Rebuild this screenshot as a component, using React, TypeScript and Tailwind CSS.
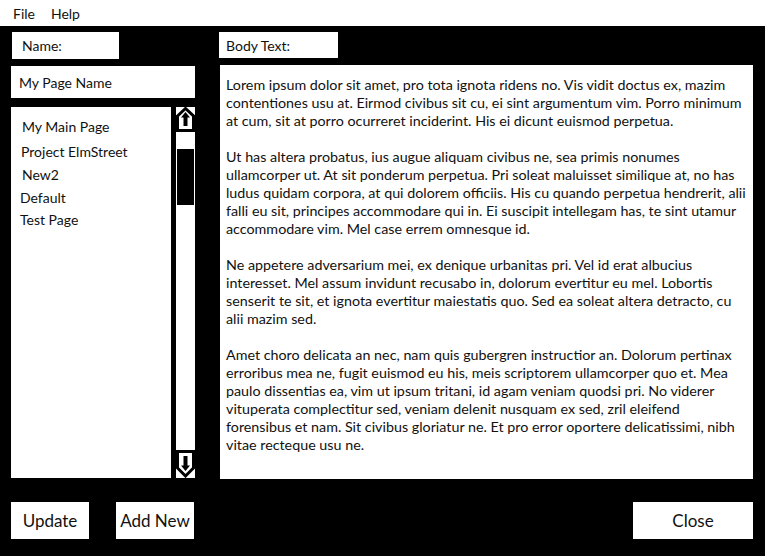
import React from "react";

const paragraphs: string[][] = [
  [
    "Lorem ipsum dolor sit amet, pro tota ignota ridens no. Vis vidit doctus ex, mazim",
    "contentiones usu at. Eirmod civibus sit cu, ei sint argumentum vim. Porro minimum",
    "at cum, sit at porro ocurreret inciderint. His ei dicunt euismod perpetua.",
  ],
  [
    "Ut has altera probatus, ius augue aliquam civibus ne, sea primis nonumes",
    "ullamcorper ut. At sit ponderum perpetua. Pri soleat maluisset similique at, no has",
    "ludus quidam corpora, at qui dolorem officiis. His cu quando perpetua hendrerit, alii",
    "falli eu sit, principes accommodare qui in. Ei suscipit intellegam has, te sint utamur",
    "accommodare vim. Mel case errem omnesque id.",
  ],
  [
    "Ne appetere adversarium mei, ex denique urbanitas pri. Vel id erat albucius",
    "interesset. Mel assum invidunt recusabo in, dolorum evertitur eu mel. Lobortis",
    "senserit te sit, et ignota evertitur maiestatis quo. Sed ea soleat altera detracto, cu",
    "alii mazim sed.",
  ],
  [
    "Amet choro delicata an nec, nam quis gubergren instructior an. Dolorum pertinax",
    "erroribus mea ne, fugit euismod eu his, meis scriptorem ullamcorper quo et. Mea",
    "paulo dissentias ea, vim ut ipsum tritani, id agam veniam quodsi pri. No viderer",
    "vituperata complectitur sed, veniam delenit nusquam ex sed, zril eleifend",
    "forensibus et nam. Sit civibus gloriatur ne. Et pro error oportere delicatissimi, nibh",
    "vitae recteque usu ne.",
  ],
];

function UpArrow() {
  return (
    <svg width="19" height="25" viewBox="0 0 19 25">
      <polygon points="1.5,9 9.5,1.5 17.5,9 17.5,23.5 1.5,23.5" fill="white" stroke="black" strokeWidth="3" />
      <polygon points="9.5,5 14,10.5 11.5,10.5 11.5,19 7.5,19 7.5,10.5 5,10.5" fill="black" />
    </svg>
  );
}

function DownArrow() {
  return (
    <svg width="19" height="28" viewBox="0 0 19 28">
      <polygon points="1.5,1.5 17.5,1.5 17.5,18 9.5,26 1.5,18" fill="white" stroke="black" strokeWidth="3" />
      <polygon points="9.5,21 14,15.5 11.5,15.5 11.5,6 7.5,6 7.5,15.5 5,15.5" fill="black" />
    </svg>
  );
}

export default function App() {
  return (
    <div
      className="w-[765px] h-[556px] bg-black flex flex-col overflow-hidden text-[#111]"
      style={{ fontFamily: "Lato, 'Open Sans', sans-serif" }}
    >
      <div className="h-[26px] bg-white flex items-center text-[14px] shrink-0">
        <span className="ml-[13px]">File</span>
        <span className="ml-[16px]">Help</span>
      </div>
      <div className="flex h-[453px]">
        <div className="ml-[11px] w-[184px] pt-[6px] flex flex-col">
          <div className="ml-[1px] w-[107px] h-[27px] bg-white flex items-center pl-[10px] text-[14px]">
            Name:
          </div>
          <div className="mt-[7px] w-[184px] h-[32px] bg-white flex items-center pl-[8px] text-[14px]">
            My Page Name
          </div>
          <div className="mt-[9px] flex h-[371px] gap-[5px]">
            <div className="w-[160px] bg-white text-[14px] flex flex-col pt-[9px]">
              <div className="ml-[11px] h-[20px] flex items-center">My Main Page</div>
              <div className="ml-[10px] mt-[5px] h-[20px] flex items-center">Project ElmStreet</div>
              <div className="ml-[11px] mt-[3px] h-[20px] flex items-center">New2</div>
              <div className="ml-[9px] mt-[3px] h-[20px] flex items-center">Default</div>
              <div className="ml-[9px] mt-[2px] h-[20px] flex items-center">Test Page</div>
            </div>
            <div className="w-[19px] bg-white flex flex-col justify-between">
              <div className="flex flex-col">
                <UpArrow />
                <div className="mt-[17px] ml-[1px] w-[17px] h-[56px] bg-black" />
              </div>
              <DownArrow />
            </div>
          </div>
        </div>
        <div className="ml-[24px] w-[534px] pt-[6px] flex flex-col">
          <div className="w-[119px] h-[26px] bg-white flex items-center pl-[7px] text-[14px]">
            Body Text:
          </div>
          <div className="mt-[7px] ml-[1px] w-[533px] h-[414px] bg-white pl-[6px] pt-[11px] text-[14.3px] leading-[18px]">
            {paragraphs.map((p, i) => (
              <div key={i} className={i > 0 ? "mt-[18px]" : ""}>
                {p.map((line, j) => (
                  <div key={j} className="whitespace-nowrap">
                    {line}
                  </div>
                ))}
              </div>
            ))}
          </div>
        </div>
      </div>
      <div className="flex mt-[23px] h-[37px] text-[17px]">
        <div className="ml-[11px] w-[78px] bg-white flex items-center justify-center">Update</div>
        <div className="ml-[27px] w-[78px] bg-white flex items-center justify-center">Add New</div>
        <div className="ml-auto mr-[12px] w-[120px] bg-white flex items-center justify-center">Close</div>
      </div>
    </div>
  );
}
